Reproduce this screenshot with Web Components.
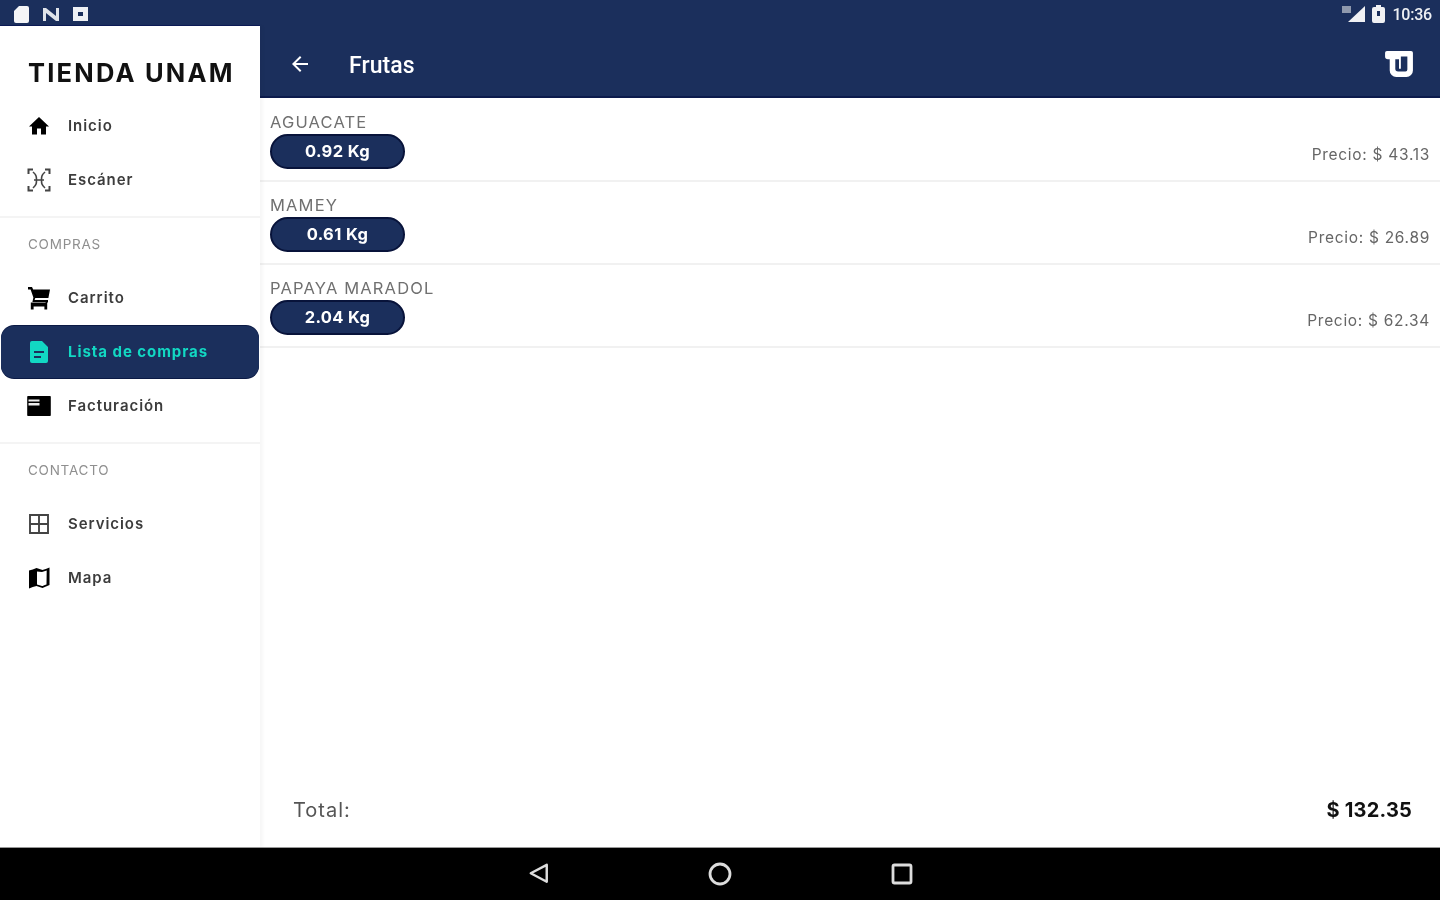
<!DOCTYPE html>
<html lang="es">
<head>
<meta charset="utf-8">
<title>Tienda UNAM</title>
<style>
  html, body { margin: 0; height: 100%; background: #fff; overflow: hidden; }
  body { font-family: "Inter", "Liberation Sans", sans-serif; }
</style>
</head>
<body>
<app-shell>
  <status-bar slot="status"></status-bar>
  <nav-drawer slot="drawer">
    <drawer-item icon="home">Inicio</drawer-item>
    <drawer-item icon="scan">Escáner</drawer-item>
    <drawer-section label="COMPRAS"></drawer-section>
    <drawer-item icon="cart">Carrito</drawer-item>
    <drawer-item icon="list" active>Lista de compras</drawer-item>
    <drawer-item icon="bill">Facturación</drawer-item>
    <drawer-section label="CONTACTO"></drawer-section>
    <drawer-item icon="grid">Servicios</drawer-item>
    <drawer-item icon="map">Mapa</drawer-item>
  </nav-drawer>
  <app-toolbar slot="toolbar">Frutas</app-toolbar>
  <cart-row slot="main" name="AGUACATE" qty="0.92 Kg" price="Precio: $ 43.13"></cart-row>
  <cart-row slot="main" name="MAMEY" qty="0.61 Kg" price="Precio: $ 26.89"></cart-row>
  <cart-row slot="main" name="PAPAYA MARADOL" qty="2.04 Kg" price="Precio: $ 62.34"></cart-row>
  <total-bar slot="total" amount="$ 132.35"></total-bar>
  <system-nav slot="sysnav"></system-nav>
</app-shell>

<script>
const ICONS = {
  home: `<path fill="currentColor" d="M10 20.5v-6h4v6h5v-8h3L12 3 2 12.5h3v8z"/>`,
  scan: `<g fill="none" stroke="#444" stroke-width="2">
      <path d="M1.500 6V1.500H6M18 1.500h4.500V6M1.500 18v4.500H6M18 22.500h4.500V18"/>
      <path d="M6 4c3.500 3 3.500 5 3.500 8s0 5-3.500 8M18 4c-3.500 3-3.500 5-3.500 8s0 5 3.500 8M7 12h10" stroke-width="1.600"/>
    </g>`,
  cart: `<path fill="currentColor" d="M1 1h4l1.200 2.600H23l-1.600 8.400H8.300L7.600 14H21v2.400H3.800v7h2.800v-3h10.800v3h2.800v-7h-1.600V16H5.400l1-4.400L3.600 3.400H1z"/>`,
  list: `<path fill="currentColor" fill-rule="evenodd" d="M5 1h10l6 6v14a2 2 0 0 1-2 2H5a2 2 0 0 1-2-2V3a2 2 0 0 1 2-2zM7 11v2h10v-2zM7 16v2h7v-2z"/>`,
  bill: `<path fill="currentColor" d="M1 2h22a.8.8 0 0 1 .8.8v18.400a.8.8 0 0 1-.8.8H1a.8.8 0 0 1-.8-.8V2.800A.8.8 0 0 1 1 2z"/><path fill="#eee" d="M1.500 5.500h11v2h-11zM1.500 9h11v2.500h-11z"/>`,
  grid: `<path fill="none" stroke="#444" stroke-width="1.900" d="M3 3h18v18H3zM12 3v18M3 12h18"/>`,
  map: `<path fill="currentColor" fill-rule="evenodd" d="M2 4.500c2.500-.5 5-1.500 7.500-2.500l6 2c2-.5 4.500-1.500 7-2.500v17.500c-2.500 1-4.500 2-7 3l-6-2c-2.500.5-5 1.500-7.500 2.500zM10 5.500v13l5 1.600c1-.4 2-.8 4.500-1.700l.2-13.900c-1.500.6-3.200 1-4.700 1.400z"/>`
};

const drawerItemTpl = document.createElement("template");
drawerItemTpl.innerHTML = `
<style>
  :host { display: block; height: 54px; padding: 1px 1px; box-sizing: border-box; }
  .row {
    height: 52px; box-sizing: border-box;
    display: flex; align-items: center; gap: 17px; padding-left: 26px;
    border-radius: 13px; color: #000;
  }
  svg { width: 24px; height: 24px; flex: none; }
  .txt { font-size: 15px; font-weight: 600; color: #3c3c3c; letter-spacing: .95px; white-space: nowrap; margin-top: -1px; }
  :host([active]) .row { background: #1b2f5c; box-shadow: 0 1px 0 #0b1a45, 0 -1px 0 #0b1a45; color: #12d8c3; }
  :host([active]) .txt { color: #12d8c3; font-weight: 700; }
</style>
<div class="row"><svg viewBox="0 0 24 24"></svg><span class="txt"><slot></slot></span></div>`;
class DrawerItem extends HTMLElement {
  constructor() {
    super();
    this.attachShadow({ mode: "open" }).appendChild(drawerItemTpl.content.cloneNode(true));
  }
  connectedCallback() {
    this.shadowRoot.querySelector("svg").innerHTML = ICONS[this.getAttribute("icon")] || "";
  }
}
customElements.define("drawer-item", DrawerItem);

class DrawerSection extends HTMLElement {
  constructor() {
    super();
    this.attachShadow({ mode: "open" }).innerHTML = `
    <style>
      :host { display: block; margin-top: 9px; border-top: 2px solid #f4f4f4; height: 53px; }
      div { padding: 18px 0 0 28px; font-size: 13.500px; line-height: 17px; color: #8f8f8f; letter-spacing: .75px; }
    </style>
    <div></div>`;
  }
  connectedCallback() {
    this.shadowRoot.querySelector("div").textContent = this.getAttribute("label");
  }
}
customElements.define("drawer-section", DrawerSection);

class NavDrawer extends HTMLElement {
  constructor() {
    super();
    this.attachShadow({ mode: "open" }).innerHTML = `
    <style>
      :host { display: block; width: 260px; height: 100%; background: #fff; position: relative; z-index: 2;
              box-shadow: 0 -1px 0 #0b1a55, 3px 0 3px rgba(0,0,0,.035); }
      h1 { margin: 0; padding: 32px 0 0 28px; height: 73px; box-sizing: border-box;
           font-size: 25.500px; line-height: 30px; font-weight: 700; color: #111; letter-spacing: 2.200px; white-space: nowrap; }
    </style>
    <h1>TIENDA UNAM</h1>
    <slot></slot>`;
  }
}
customElements.define("nav-drawer", NavDrawer);

class StatusBar extends HTMLElement {
  constructor() {
    super();
    this.attachShadow({ mode: "open" }).innerHTML = `
    <style>
      :host { display: flex; height: 26px; background: #1b2f5c; align-items: center; justify-content: space-between; padding: 2px 8px 0 14px; box-sizing: border-box; }
      .l, .r { display: flex; align-items: center; }
      .l { gap: 14px; } .r { gap: 7px; }
      svg { display: block; }
      span { color: #eef0f4; font: 500 16px "Roboto", sans-serif; letter-spacing: -.2px; }
    </style>
    <div class="l">
      <svg width="15" height="17" viewBox="0 0 15 17"><path fill="#f4f5f7" d="M5 0h8a2 2 0 0 1 2 2v13a2 2 0 0 1-2 2H2a2 2 0 0 1-2-2V5z"/></svg>
      <svg width="16" height="13" viewBox="0 0 16 13"><path fill="#dfe3ea" d="M0 0h3l10 8V0h3v13h-3L3 5v8H0z"/></svg>
      <svg width="15" height="14" viewBox="0 0 15 14"><path fill="#eef0f4" fill-rule="evenodd" d="M0 0h15v14H0zM5 5v4h5V5z"/></svg>
    </div>
    <div class="r">
      <svg width="23" height="16" viewBox="0 0 23 16"><path fill="#f0f1f4" d="M23 0v16H6z"/><path fill="#8f99ad" d="M0 0h9v7H0z"/></svg>
      <svg width="13" height="18" viewBox="0 0 13 18"><path fill="#f0f1f4" fill-rule="evenodd" d="M4 0h5v2h2a2 2 0 0 1 2 2v12a2 2 0 0 1-2 2H2a2 2 0 0 1-2-2V4a2 2 0 0 1 2-2h2zM5 6v5h3V6z"/></svg>
      <span>10:36</span>
    </div>`;
  }
}
customElements.define("status-bar", StatusBar);

class AppToolbar extends HTMLElement {
  constructor() {
    super();
    this.attachShadow({ mode: "open" }).innerHTML = `
    <style>
      :host { display: flex; height: 72px; background: #1b2f5c; align-items: center; padding: 7px 27px 0 28px; box-sizing: border-box;
              border-bottom: 2px solid #0c1b4c; color: #fff; }
      .arrow { width: 24px; height: 24px; flex: none; margin-right: 37px; margin-top: -2px; }
      .t { font: 500 23px "Roboto", sans-serif; flex: 1; letter-spacing: .1px; margin-top: 1px; }
      .logo { width: 28px; height: 26px; margin-top: -2px; }
    </style>
    <svg class="arrow" viewBox="0 0 24 24"><path fill="#fff" d="M20 11H7.800l5.600-5.600L12 4l-8 8 8 8 1.400-1.400L7.800 13H20z"/></svg>
    <span class="t"><slot></slot></span>
    <svg class="logo" viewBox="0 0 30 28"><path fill="#fff" fill-rule="evenodd" d="M2 0h26a2 2 0 0 1 2 2v19a7 7 0 0 1-7 7H12a7 7 0 0 1-7-7V9H3a3 3 0 0 1-3-3V2a2 2 0 0 1 2-2zM11 9v10a3 3 0 0 0 3 3h8a2 2 0 0 0 2-2V6h-7v13h-2V9z"/></svg>`;
  }
}
customElements.define("app-toolbar", AppToolbar);

class CartRow extends HTMLElement {
  constructor() {
    super();
    this.attachShadow({ mode: "open" }).innerHTML = `
    <style>
      :host { display: grid; grid-template-columns: 1fr auto; align-content: start; height: 83px; box-sizing: border-box; padding: 14px 10px 0 10px; border-bottom: 2px solid #f1f1f1; }
      .name { grid-column: 1 / 3; font-size: 16.500px; line-height: 18px; color: #707070; letter-spacing: 1.150px; }
      .pill { width: 135px; height: 35px; box-sizing: border-box; border-radius: 18px; background: #1b2f5c; border: 2px solid #08133a;
              color: #fff; font: 700 16.500px/31px "Inter", sans-serif; text-align: center; letter-spacing: .35px; margin-top: 3px; }
      .price { align-self: end; font-size: 15.500px; line-height: 18px; color: #666; margin-bottom: 5px; letter-spacing: .7px; }
    </style>
    <div class="name"></div><div class="pill"></div><div class="price"></div>`;
  }
  connectedCallback() {
    const q = s => this.shadowRoot.querySelector(s);
    q(".name").textContent = this.getAttribute("name");
    q(".pill").textContent = this.getAttribute("qty");
    q(".price").textContent = this.getAttribute("price");
  }
}
customElements.define("cart-row", CartRow);

class TotalBar extends HTMLElement {
  constructor() {
    super();
    this.attachShadow({ mode: "open" }).innerHTML = `
    <style>
      :host { display: flex; justify-content: space-between; align-items: center; height: 74px; padding: 0 28px 0 33px; box-sizing: border-box; }
      .l { font-size: 20px; color: #555; letter-spacing: 1px; }
      .a { font-size: 20px; font-weight: 700; color: #111; letter-spacing: .2px; }
    </style>
    <span class="l">Total:</span><span class="a"></span>`;
  }
  connectedCallback() {
    this.shadowRoot.querySelector(".a").textContent = this.getAttribute("amount");
  }
}
customElements.define("total-bar", TotalBar);

class SystemNav extends HTMLElement {
  constructor() {
    super();
    this.attachShadow({ mode: "open" }).innerHTML = `
    <style>
      :host { display: flex; height: 53px; background: #000; justify-content: center; align-items: center; gap: 158px; border-top: 1px solid #999; box-sizing: border-box; }
      svg { width: 24px; height: 24px; display: block; }
    </style>
    <svg viewBox="0 0 24 24"><path fill="none" stroke="#ddd" stroke-width="2.600" stroke-linejoin="round" d="M21 3L4 12l17 9z" transform="translate(1 0) scale(.94 .94)"/></svg>
    <svg viewBox="0 0 24 24"><circle cx="12" cy="12" r="10" fill="none" stroke="#ddd" stroke-width="2.800"/></svg>
    <svg viewBox="0 0 24 24"><rect x="3" y="3" width="18" height="18" rx="1.500" fill="none" stroke="#ddd" stroke-width="2.800"/></svg>`;
  }
}
customElements.define("system-nav", SystemNav);

class AppShell extends HTMLElement {
  constructor() {
    super();
    this.attachShadow({ mode: "open" }).innerHTML = `
    <style>
      :host { display: flex; flex-direction: column; width: 1440px; height: 900px; filter: blur(.5px); }
      .mid { flex: 1; min-height: 0; display: flex; }
      .content { flex: 1; min-width: 0; display: flex; flex-direction: column; }
      .list { flex: 1; min-height: 0; padding-top: 1px; }
    </style>
    <slot name="status"></slot>
    <div class="mid">
      <slot name="drawer"></slot>
      <div class="content">
        <slot name="toolbar"></slot>
        <div class="list"><slot name="main"></slot></div>
        <slot name="total"></slot>
      </div>
    </div>
    <slot name="sysnav"></slot>`;
  }
}
customElements.define("app-shell", AppShell);
</script>
</body>
</html>
